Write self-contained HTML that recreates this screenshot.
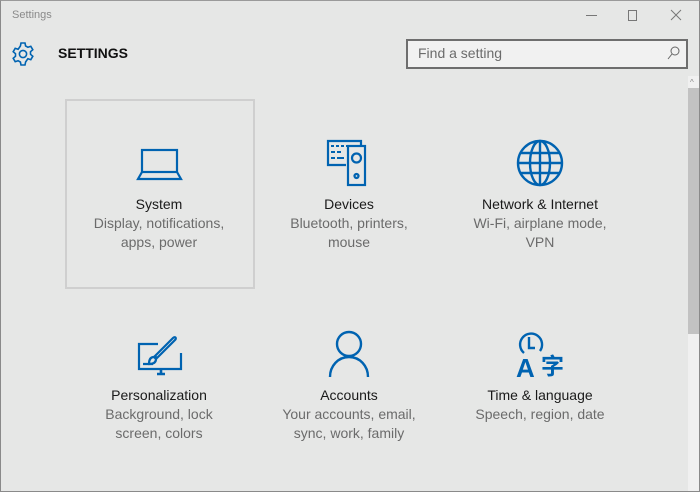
<!DOCTYPE html>
<html><head><meta charset="utf-8"><style>
*{margin:0;padding:0;box-sizing:border-box}
body{width:700px;height:492px;overflow:hidden;background:#e6e7e6;font-family:"Liberation Sans","Noto Sans CJK SC",sans-serif;position:relative}
.win{position:absolute;left:0;top:0;width:700px;height:492px;border:1px solid #8a8a8a;border-top-color:#9a9a9a}
.t{position:absolute}
.tile{position:absolute;width:190px;text-align:center}
.tile svg{display:block;margin:0 auto;overflow:visible}
.h{position:absolute;left:0;width:100%;text-align:center;font-size:14px;color:#1a1a1a}
.s{position:absolute;left:0;width:100%;text-align:center;font-size:14px;color:#6b6b6b;line-height:19px}
</style></head><body>
<div class="win"></div>
<div class="t" style="left:12px;top:9px;font-size:11px;color:#8a8a8a">Settings</div>
<div class="t" style="left:586px;top:15px;width:11px;height:1px;background:#777"></div>
<div class="t" style="left:628px;top:10px;width:9px;height:11px;border:1px solid #777"></div>
<svg class="t" style="left:670px;top:9px" width="12" height="12"><path d="M1 1L11 11M11 1L1 11" stroke="#777" stroke-width="1"/></svg>
<svg class="t" style="left:10px;top:41px" width="26" height="26" viewBox="0 0 26 26"><g fill="none" stroke="#0063b1" stroke-width="1.6"><path d="M11 2h4l.6 3 2.3 1.3 2.9-1 2 3.4-2.3 2 0 2.6 2.3 2-2 3.4-2.9-1L15.6 21 15 24h-4l-.6-3-2.3-1.3-2.9 1-2-3.4 2.3-2V12.7l-2.3-2 2-3.4 2.9 1L10.4 5z"/><circle cx="13" cy="13" r="3.6"/></g></svg>
<div class="t" style="left:58px;top:45px;font-size:14px;font-weight:bold;color:#111">SETTINGS</div>
<div class="t" style="left:406px;top:39px;width:282px;height:30px;border:2px solid #6e6e6e;background:#f1f1f1"></div>
<div class="t" style="left:418px;top:45px;font-size:14px;color:#6b6b6b">Find a setting</div>
<svg class="t" style="left:667px;top:46px" width="13" height="14"><circle cx="8" cy="5" r="4" fill="none" stroke="#666" stroke-width="1"/><path d="M5 8L1 13" stroke="#666"/></svg>
<div class="t" style="left:688px;top:76px;width:11px;height:415px;background:#f0f0f0"></div>
<div class="t" style="left:688px;top:88px;width:11px;height:246px;background:#c2c2c2"></div>
<div class="t" style="left:690px;top:78px;font-size:8px;color:#888">^</div>
<div class="t" style="left:65px;top:99px;width:190px;height:190px;border:2px solid #cfcfcf"></div>

<div class="tile" style="left:64px;top:140px;height:120px">
<svg width="60" height="46" viewBox="0 0 60 46"><g fill="none" stroke="#0063b1" stroke-width="2.2"><rect x="13" y="10" width="35" height="22"/><path d="M13 32L9 39H52L48 32"/></g></svg>
<div class="h" style="top:56px">System</div>
<div class="s" style="top:74px">Display, notifications,<br>apps, power</div></div>

<div class="tile" style="left:254px;top:140px;height:120px">
<svg width="60" height="46" viewBox="0 0 60 46"><g fill="none" stroke="#0063b1" stroke-width="2.2"><path d="M27 25H9V1H42V6"/><rect x="29" y="6" width="17" height="39"/><circle cx="37.5" cy="18" r="4.5"/><circle cx="37.5" cy="36" r="2"/></g><g fill="#0063b1"><rect x="12" y="5" width="3" height="2"/><rect x="17" y="5" width="3" height="2"/><rect x="22" y="5" width="3" height="2"/><rect x="27" y="5" width="3" height="2"/><rect x="32" y="5" width="3" height="2"/><rect x="12" y="11" width="4" height="2"/><rect x="18" y="11" width="4" height="2"/><rect x="12" y="17" width="4" height="2"/><rect x="18" y="17" width="7" height="2"/></g></svg>
<div class="h" style="top:56px">Devices</div>
<div class="s" style="top:74px">Bluetooth, printers,<br>mouse</div></div>

<div class="tile" style="left:445px;top:140px;height:120px">
<svg width="60" height="46" viewBox="0 0 60 46"><g fill="none" stroke="#0063b1" stroke-width="2.4"><circle cx="30" cy="23" r="22"/><ellipse cx="30" cy="23" rx="10" ry="22"/><path d="M30 1V45M8 23H52M11 13H49M11 33H49"/></g></svg>
<div class="h" style="top:56px">Network &amp; Internet</div>
<div class="s" style="top:74px">Wi-Fi, airplane mode,<br>VPN</div></div>

<div class="tile" style="left:64px;top:333px;height:120px">
<svg width="60" height="46" viewBox="0 0 60 46"><g fill="none" stroke="#0063b1" stroke-width="2.2"><path d="M29 11H10V36H52V20"/><path d="M28 41H36M32 36V41" stroke-width="2.6"/><path d="M14 31H24M26 23L44 5c2-2 4 0 2 2L28 25z"/><path d="M25 24c-4 0-5 3-5 7 4 0 7-1 7-5z"/></g></svg>
<div class="h" style="top:54px">Personalization</div>
<div class="s" style="top:72px">Background, lock<br>screen, colors</div></div>

<div class="tile" style="left:254px;top:330px;height:120px">
<svg width="60" height="46" viewBox="0 0 60 46"><g fill="none" stroke="#0063b1" stroke-width="2.4"><circle cx="30" cy="14" r="12"/><path d="M11 47c0-11 8-20 19-20s19 9 19 20"/></g></svg>
<div class="h" style="top:57px">Accounts</div>
<div class="s" style="top:75px">Your accounts, email,<br>sync, work, family</div></div>

<div class="tile" style="left:445px;top:330px;height:120px">
<svg width="60" height="46" viewBox="0 0 60 46"><g fill="none" stroke="#0063b1" stroke-width="2.4"><path d="M30 21A11 11 0 1 0 14 23"/><path d="M19 7V18H25"/></g><text x="6" y="47" font-family="Liberation Sans" font-size="26" font-weight="bold" fill="#0063b1">A</text><text x="31" y="44" font-family="Noto Sans CJK SC" font-size="23" font-weight="bold" fill="#0063b1">字</text></svg>
<div class="h" style="top:57px">Time &amp; language</div>
<div class="s" style="top:75px">Speech, region, date</div></div>
</body></html>
